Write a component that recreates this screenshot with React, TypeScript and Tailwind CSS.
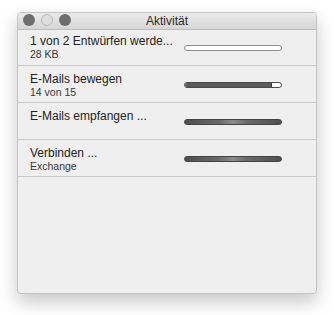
const rows = [
  { title: "1 von 2 Entwürfen werde...", sub: "28 KB", bar: "empty", first: true },
  { title: "E-Mails bewegen", sub: "14 von 15", bar: "partial" },
  { title: "E-Mails empfangen ...", sub: "", bar: "busy" },
  { title: "Verbinden ...", sub: "Exchange", bar: "busy" },
];

const Bar = ({ kind }: { kind: string }) => {
  if (kind === "empty") {
    return <div className="h-[6px] w-[98px] rounded-full border border-[#8e8e8e] bg-white" />;
  }
  if (kind === "partial") {
    return (
      <div className="flex h-[6px] w-[98px] overflow-hidden rounded-full border border-[#4a4a4a] bg-white">
        <div className="h-full w-[86px] bg-[#5c5c5c]" />
        <div className="h-full w-px bg-[#3a3a3a]" />
      </div>
    );
  }
  return (
    <div className="h-[6px] w-[98px] rounded-full border border-[#444] bg-[linear-gradient(to_right,#4f4f4f,#6a6a6a_35%,#8c8c8c_50%,#6a6a6a_65%,#4f4f4f)]" />
  );
};

export default function App() {
  return (
    <div className="h-[315px] w-[334px] bg-white pl-[17px] pt-[12px] font-['Liberation_Sans',Arial,sans-serif]">
      <div className="flex h-[282px] w-[300px] flex-col overflow-hidden rounded-[4px] border border-[#c4c4c4] bg-[#efefef] shadow-[0_8px_18px_rgba(0,0,0,0.22)]">
        <div className="relative flex h-[17px] shrink-0 items-center border-b border-[#bdbdbd] bg-[linear-gradient(#ebebeb,#d6d6d6)]">
          <div className="absolute left-[5px] top-[1px] flex gap-[6px]">
            <span className="h-[12px] w-[12px] rounded-full bg-[#6e6e6e]" />
            <span className="h-[12px] w-[12px] rounded-full border border-[#b8b8b8] bg-[#dedede]" />
            <span className="h-[12px] w-[12px] rounded-full bg-[#6e6e6e]" />
          </div>
          <div className="w-full text-center text-[12px] leading-[14px] text-[#2a2a2a]">Aktivität</div>
        </div>
        {rows.map((r) => (
          <div
            key={r.title}
            className={`flex shrink-0 items-start border-b border-[#c9c9c9] pl-[12px] ${r.first ? "h-[36px] pt-[4px]" : "h-[37px] pt-[6px]"}`}
          >
            <div className="flex w-[154px] flex-col">
              <span className="text-[12px] leading-[14px] text-[#222]">{r.title}</span>
              {r.sub && <span className="text-[10.5px] leading-[12px] text-[#3a3a3a]">{r.sub}</span>}
            </div>
            <div className={r.first ? "mt-[11px]" : "mt-[10px]"}>
              <Bar kind={r.bar} />
            </div>
          </div>
        ))}
      </div>
    </div>
  );
}
